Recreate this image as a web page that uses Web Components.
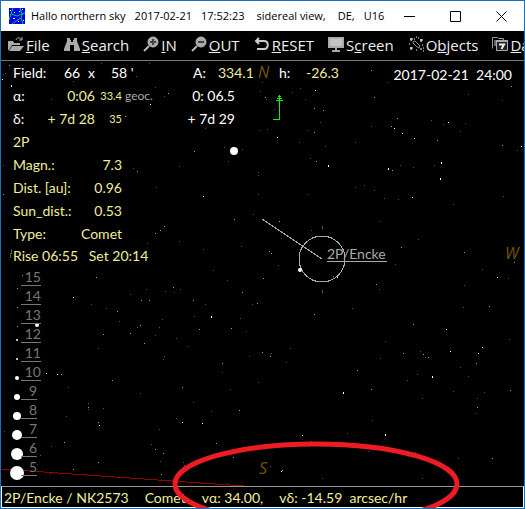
<!DOCTYPE html>
<html lang="en">
<head>
<meta charset="utf-8">
<title>Hallo northern sky</title>
<style>
  html, body { height: 100%; }
  body { margin: 0; background: #000; overflow: hidden; }
</style>
</head>
<body>
<sky-window>
  <title-bar slot="title">
    <span>Hallo northern sky</span>
    <span>2017-02-21</span>
    <span>17:52:23</span>
    <span class="wide">sidereal view,</span>
    <span class="wide">DE,</span>
    <span>U16</span>
  </title-bar>
  <menu-bar slot="menu">
    <menu-item icon="folder"><u>F</u>ile</menu-item>
    <menu-item icon="search"><u>S</u>earch</menu-item>
    <menu-item icon="plus"><u>I</u>N</menu-item>
    <menu-item icon="minus"><u>O</u>UT</menu-item>
    <menu-item icon="reset"><u>R</u>ESET</menu-item>
    <menu-item icon="screen">S<u>c</u>reen</menu-item>
    <menu-item icon="objects">O<u>b</u>jects</menu-item>
    <menu-item icon="date"><u>D</u>a</menu-item>
  </menu-bar>
  <star-map slot="map">
    <sky-data></sky-data>
    <magnitude-scale></magnitude-scale>
  </star-map>
  <status-bar slot="status"></status-bar>
</sky-window>

<script>
// small helper shared by all elements
function render(el, html) {
  const template = document.createElement('template');
  template.innerHTML = html;
  el.attachShadow({ mode: 'open' }).appendChild(template.content.cloneNode(true));
}

const ICONS = {
  folder: '<path d="M0 14V5h5l1 2h6v2H4l-3 5z"/><path d="M4 10h12l-4 5H1z"/><path d="M8 4c1-3 4-3 6 0m0-3v3h-3" fill="none" stroke="#aaa"/>',
  search: '<path d="M3 2h3v2h1v2h2V4h1V2h3v3l3 8v2h-6V9H6v6H0v-2l3-8z"/>',
  plus: '<circle cx="10" cy="6" r="5" stroke="#b8b8b8"/><path d="M10 3v6M7 6h6" stroke="#444" stroke-width="2"/><path d="M6 10l-5 5" stroke="#b8b8b8" stroke-width="2"/>',
  minus: '<circle cx="10" cy="6" r="5" stroke="#b8b8b8"/><path d="M7 6h6" stroke="#444" stroke-width="2"/><path d="M6 10l-5 5" stroke="#b8b8b8" stroke-width="2"/>',
  reset: '<path d="M2 5h8c5 0 5 8 0 8H3M5 2L2 5l3 3" fill="none" stroke="#ccc" stroke-width="2"/>',
  screen: '<path d="M0 1h16v11H0z"/><path d="M2 3h12v7H2z" fill="#c4c4c4"/><path d="M7 12h2v2h3v2H4v-2h3z"/>',
  objects: '<path d="M5 6l2-1 5 5-1 2-2-1-4-4z" fill="none" stroke="#888"/><path d="M2 3h3M3 2v3M12 4h3M13 3v3M2 12h3M3 11v3M8 1h1M6 3h1M10 2h1M14 9h1M12 13h2M15 12h1M8 14h1M1 8h1M15 15h1" stroke="#fff"/>',
  date: '<path d="M.5 12.500V1.500h5l1 1h5v2" fill="none" stroke="#999"/><path d="M2 5h2M2 7h2M2 9h2" stroke="#ccc"/><path d="M4.500 4.500h11v10h-11z" fill="#222" stroke="#aaa"/><path d="M4 4h12v2H4z" fill="#aaa"/><path d="M7 8.500h5l-2.500 4.500" fill="none" stroke="#eee" stroke-width="2"/>'
};

class SkyWindow extends HTMLElement {
  constructor() {
    super();
    render(this, `
      <style>
        :host {
          display: flex;
          flex-direction: column;
          position: relative;
          box-sizing: border-box;
          min-height: 100vh;
          overflow: hidden;
          border: 1px solid #1a6fb8;
          background: #000;
          color: #fff;
          font: 14px/23px Lato, "Open Sans", sans-serif;
        }
        ::slotted([slot=map]) { flex: 1; }
        .mark {
          position: absolute;
          left: 171px;
          bottom: -19px;
          width: 289px;
          height: 86px;
          pointer-events: none;
        }
      </style>
      <slot name="title"></slot>
      <slot name="menu"></slot>
      <slot name="map"></slot>
      <slot name="status"></slot>
      <svg class="mark" viewBox="0 0 289 86">
        <ellipse cx="144" cy="43" rx="141" ry="40" fill="none" stroke="#ed1c24" stroke-width="5"/>
      </svg>
    `);
  }
}

class TitleBar extends HTMLElement {
  constructor() {
    super();
    render(this, `
      <style>
        :host {
          display: flex;
          align-items: center;
          height: 30px;
          padding-left: 8px;
          background: #fff;
          color: #000;
          font: 11px/30px "Open Sans", sans-serif;
          white-space: nowrap;
        }
        .text { display: flex; flex: 1; gap: 9px; margin-left: 6px; }
        ::slotted(.wide) { margin-left: 3px; }
        button {
          display: flex;
          align-items: center;
          justify-content: center;
          width: 46px;
          height: 30px;
          padding: 0;
          border: 0;
          background: none;
        }
        .buttons { display: flex; }
        .buttons svg { fill: none; stroke: #000; }
      </style>
      <svg width="16" height="16" viewBox="0 0 16 16">
        <path d="M0 0h16v16H0z" fill="#0000f0"/>
        <path d="M4 0L2 6 0 12M2 6l6 2 5-2 3-1M13 6l-1 4 2 6M12 10l-5 3-4 3M11 0l2 6" fill="none" stroke="#0c4"/>
        <path d="M5 4h1v1H5zM10 3h1v1h-1zM4 10h2v1H4zM9 13h1v1H9zM13 1h1v1h-1zM14 12h1v1h-1zM1 2h1v1H1z" fill="#fff"/>
      </svg>
      <div class="text"><slot></slot></div>
      <div class="buttons">
        <button aria-label="Minimize"><svg width="11" height="11"><path d="M0 5.5h11"/></svg></button>
        <button aria-label="Maximize"><svg width="11" height="11"><path d="M.5.5h10v10H.5z"/></svg></button>
        <button aria-label="Close"><svg width="11" height="11"><path d="M.5.5l10 10M10.500.5l-10 10"/></svg></button>
      </div>
    `);
  }
}

class MenuBar extends HTMLElement {
  constructor() {
    super();
    render(this, `
      <style>
        :host {
          display: flex;
          gap: 14px;
          height: 29px;
          padding-left: 7px;
          overflow: hidden;
          border-bottom: 1px solid #777;
          background: #000;
        }
      </style>
      <slot></slot>
    `);
  }
}

class MenuItem extends HTMLElement {
  constructor() {
    super();
    render(this, `
      <style>
        :host { display: block; flex: none; }
        button {
          display: flex;
          align-items: center;
          gap: 2px;
          padding: 0;
          border: 0;
          background: none;
          color: #eee;
          font: 15px/29px "Open Sans", sans-serif;
          white-space: nowrap;
        }
        svg { fill: #aaa; margin-bottom: 4px; }
      </style>
      <button>
        <svg width="16" height="16" viewBox="0 0 16 16">${ICONS[this.getAttribute('icon')]}</svg>
        <span><slot></slot></span>
      </button>
    `);
  }
}

// star positions: x y pairs, one list for each brightness
const STARS = {
  '#505050': `147 2 100 2 72 20 4 12 2 13 153 26 162 35 50 38 134 15 298 27 290 31 258 30 260 21 264 38
    272 48 303 38 318 61 306 69 257 69 265 68 297 81 323 85 308 97 222 86 240 88 226 100 177 105 203 67
    385 21 465 33 499 39 428 59 462 62 440 63 368 65 457 70 352 81 514 89 431 104 397 104 410 106
    395 137 500 134 371 128 381 136 361 123 352 125 450 142 131 107 154 125 256 111 256 113 256 132
    305 132 2 104 145 181 177 179 201 187 251 152 279 176 309 168 239 184 276 203 211 208 225 218
    376 159 392 202 376 227 349 246 415 177 505 216 479 207 461 223 90 242 105 246 117 259 128 232
    144 227 163 229 172 230 178 227 160 257 157 265 135 265 153 273 174 276 97 286 162 294 161 297
    186 284 192 254 203 242 238 256 244 269 250 242 269 291 247 294 220 310 284 300 288 286 67 325
    138 331 87 340 87 346 102 345 65 353 157 366 174 355 50 383 39 392 149 381 158 398 36 401 49 410
    3 368 209 348 191 339 228 327 256 320 309 378 344 370 369 357 404 318 417 289 422 295 465 314
    457 305 377 296 382 279 460 245 506 277 481 330 474 335 473 350 450 329 419 335 414 312 455 395
    412 389 268 403 181 399 182 402 137 424 419 415 365 388 320 415 29 190 37 190`,
  '#999': `8 4 166 32 123 55 263 36 312 47 321 49 312 71 314 100 192 90 368 9 371 36 508 25 394 57
    388 65 434 79 499 84 389 109 135 110 2 132 162 164 158 168 153 171 232 157 277 159 267 189 269 191
    261 216 240 230 398 185 373 222 461 190 511 200 486 244 95 215 115 249 139 238 147 238 171 225
    191 238 138 263 128 271 102 272 142 281 197 267 229 266 255 241 260 290 268 294 220 301 312 252
    60 312 111 318 87 344 97 359 63 379 153 386 161 390 97 399 72 406 159 411 237 347 180 325 354 308
    368 327 420 292 425 295 473 301 400 291 410 262 507 328 474 344 489 395 214 380 231 394 280 407
    331 214 16 264 16 245 16 226 21 213`,
  '#fff': `10 24 10 25 1 18 148 43 313 29 275 76 326 104 326 105 445 61 391 67 399 72 411 77 518 85
    438 101 438 102 385 107 385 108 437 116 437 117 409 135 201 134 494 215 72 235 209 254 209 255
    45 311 56 312 98 362 180 359 200 360 340 330 340 331 382 371 382 372 300 372 429 314 429 315
    447 289 443 267 475 291 479 285 279 408 334 215`
};

const PLATE_SCALE = 1.0045;

function starPath(list) {
  const n = list.trim().split(/\s+/).map(v => Math.round(v * PLATE_SCALE));
  let d = '';
  for (let i = 0; i < n.length; i += 2) {
    d += `M${n[i]} ${n[i + 1]}h1v1h-1z`;
  }
  return d;
}

class StarMap extends HTMLElement {
  constructor() {
    super();
    const stars = Object.keys(STARS)
      .map(color => `<path fill="${color}" d="${starPath(STARS[color])}"/>`)
      .join('');
    render(this, `
      <style>
        :host { display: block; position: relative; overflow: hidden; }
        .sky { position: absolute; width: 100%; height: 100%; }
        .front { position: relative; }
        text { font: 14px Lato, sans-serif; }
        .compass { font: italic 16px "Open Sans", sans-serif; fill: #735608; }
      </style>
      <svg class="sky" viewBox="0 0 523 425" preserveAspectRatio="xMinYMin slice" fill="none">
        <g shape-rendering="crispEdges">
          ${stars}
          <path d="M0 408L243 425" stroke="#900000"/>
          <path d="M261 158L321 198" stroke="#aaa"/>
          <circle cx="321" cy="198" r="23" stroke="#aaa"/>
          <path d="M321 165h1v3h-1zM321 229h1v3h-1z" fill="#008000"/>
          <path d="M326 200h60v1h-60z" fill="#aaa"/>
          <path d="M278 34h1v25h-7v-1h6zM277 35h3v1h-3zM276 37h5v1h-5zM275 39h7v1h-7z" fill="#0f0"/>
          <path d="M9 197l2-9" stroke="#735608"/>
        </g>
        <g fill="#fff">
          <circle cx="233" cy="90" r="4"/>
          <circle cx="299" cy="209" r="2"/>
          <circle cx="36" cy="264" r="2"/>
        </g>
        <text x="326" y="198" fill="#aaa">2P/Encke</text>
        <text class="compass" x="257" y="17">N</text>
        <text class="compass" x="258" y="413">S</text>
        <text class="compass" x="504" y="198">W</text>
      </svg>
      <div class="front"><slot></slot></div>
    `);
  }
}

class SkyData extends HTMLElement {
  constructor() {
    super();
    const facts = [
      ['2P', ''],
      ['Magn.:', '7.3'],
      ['Dist. [au]:', '0.96'],
      ['Sun_dist.:', '0.53'],
      ['Type:', 'Comet']
    ];
    render(this, `
      <style>
        :host { display: block; padding: 0 12px; white-space: nowrap; }
        .field { display: grid; grid-template-columns: 51px 24px 23px 82px 25px 61px 27px 1fr auto; }
        .coord { display: grid; grid-template-columns: 30px 52px 27px 31px 82px; }
        .coord .r { text-align: right; }
        .fact { display: flex; justify-content: space-between; width: 109px; }
        .y { color: #eeee9c; }
        .small { font-size: 11px; }
        .geoc { margin-left: 3px; color: #aaa; font-size: 12px; }
        .date { line-height: 27px; margin-bottom: -4px; }
        .rise { line-height: 22px; }
      </style>
      <div class="field">
        <span>Field:</span><span>66</span><span>x</span><span>58 '</span>
        <span>A:</span><span class="y">334.1</span><span>h:</span><span class="y">-26.3</span>
        <span class="date">2017-02-21&nbsp; 24:00</span>
      </div>
      <div class="coord">
        <span>α:</span><span class="y r">0:06</span><span class="y r small">33.4</span>
        <span class="geoc">geoc.</span><span class="r">0: 06.5</span>
      </div>
      <div class="coord">
        <span>δ:</span><span class="y r">+ 7d 28</span><span class="y r small">35</span>
        <span></span><span class="r">+ 7d 29</span>
      </div>
      ${facts.map(f => `<div class="fact y"><span>${f[0]}</span><span>${f[1]}</span></div>`).join('')}
      <div class="rise y">Rise 06:55&nbsp;&nbsp; Set 20:14</div>
    `);
  }
}

class MagnitudeScale extends HTMLElement {
  constructor() {
    super();
    // dot radius for each magnitude
    const radius = { 12: 1, 11: 1, 10: 2, 9: 3, 8: 4, 7: 5, 6: 6, 5: 7 };
    let rows = '';
    for (let m = 15; m >= 5; m--) {
      rows += `
        <li>
          <svg width="20" height="18"><circle cx="16" cy="16" r="${radius[m] || 0}"/></svg>
          <span class="${m < 10 ? 'one' : 'two'}">${m}</span>
        </li>`;
    }
    render(this, `
      <style>
        :host { display: block; color: #777; }
        ul { margin: 0; padding: 0; list-style: none; }
        li { display: flex; height: 19px; line-height: 19px; }
        svg { overflow: visible; fill: #fff; }
        span { box-sizing: border-box; height: 19px; border-bottom: 1px solid #777; text-align: right; }
        .two { width: 20px; }
        .one { width: 16px; }
      </style>
      <ul>${rows}</ul>
    `);
  }
}

class StatusBar extends HTMLElement {
  constructor() {
    super();
    render(this, `
      <style>
        :host {
          display: flex;
          gap: 12px;
          height: 20px;
          padding-left: 2px;
          border: 1px solid #fff;
          border-top-color: #999;
          color: #eeee9c;
          line-height: 22px;
          white-space: nowrap;
        }
        .type { margin: 0 4px; }
        .speed { margin-left: 4px; }
      </style>
      <span>2P/Encke / NK2573</span>
      <span class="type">Comet</span>
      <span>vα: 34.00,</span>
      <span class="speed">vδ: -14.59&nbsp; arcsec/hr</span>
    `);
  }
}

customElements.define('sky-window', SkyWindow);
customElements.define('title-bar', TitleBar);
customElements.define('menu-bar', MenuBar);
customElements.define('menu-item', MenuItem);
customElements.define('star-map', StarMap);
customElements.define('sky-data', SkyData);
customElements.define('magnitude-scale', MagnitudeScale);
customElements.define('status-bar', StatusBar);
</script>
</body>
</html>
